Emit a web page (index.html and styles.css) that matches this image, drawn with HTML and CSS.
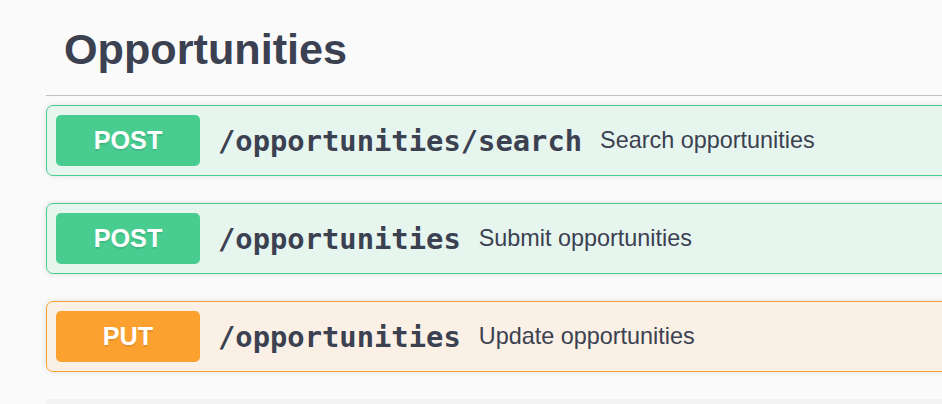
FILE: index.html
```html
<!DOCTYPE html>
<html lang="en">
<head>
<meta charset="utf-8">
<title>Opportunities</title>
<link rel="stylesheet" href="styles.css">
</head>
<body>
  <div class="wrapper">
    <section class="tag-section">
      <h4 class="tag-title">Opportunities</h4>
      <div class="ops">
        <div class="opblock opblock-post">
          <div class="summary">
            <span class="method">POST</span>
            <span class="path">/opportunities/search</span>
            <span class="desc">Search opportunities</span>
          </div>
        </div>
        <div class="opblock opblock-post">
          <div class="summary">
            <span class="method">POST</span>
            <span class="path">/opportunities</span>
            <span class="desc">Submit opportunities</span>
          </div>
        </div>
        <div class="opblock opblock-put">
          <div class="summary">
            <span class="method">PUT</span>
            <span class="path">/opportunities</span>
            <span class="desc">Update opportunities</span>
          </div>
        </div>
      </div>
    </section>
    <section class="next-section"></section>
  </div>
</body>
</html>
```
FILE: styles.css
```css
html, body {
  margin: 0;
  padding: 0;
  background: #fafafa;
  overflow: hidden;
}

body {
  font-family: "Liberation Sans", Arial, Helvetica, sans-serif;
  color: #3b4151;
}

.wrapper {
  padding-left: 46px;
  width: 1100px;
}

.tag-title {
  margin: 0 0 9px 0;
  padding: 21px 36px 18px 18px;
  font-size: 43.2px;
  line-height: 56px;
  font-weight: 700;
  color: #3b4151;
  border-bottom: 1px solid rgba(59, 65, 81, 0.3);
}

.ops {
  display: flex;
  flex-direction: column;
  gap: 27px;
}

.opblock {
  border: 1px solid #000;
  border-radius: 7px;
  box-shadow: 0 0 5px rgba(0, 0, 0, 0.12);
}

.opblock-post {
  border-color: #49cc90;
  background: rgba(73, 204, 144, 0.1);
}

.opblock-put {
  border-color: #fca130;
  background: rgba(252, 161, 48, 0.1);
}

.summary {
  display: flex;
  align-items: center;
  padding: 9px;
}

.method {
  min-width: 144px;
  height: 51px;
  display: flex;
  align-items: center;
  justify-content: center;
  border-radius: 5px;
  font-size: 25.2px;
  font-weight: 700;
  color: #fff;
  text-shadow: 0 2px 0 rgba(0, 0, 0, 0.1);
}

.opblock-post .method { background: #49cc90; }
.opblock-put .method { background: #fca130; }

.path {
  padding: 0 18px;
  font-family: "DejaVu Sans Mono", "Liberation Mono", monospace;
  font-weight: 700;
  font-size: 28.8px;
  color: #3b4151;
}

.desc {
  font-size: 23.4px;
  color: #3b4151;
}

.next-section {
  margin-top: 27px;
  height: 6px;
  background: #f3f3f3;
}
```
